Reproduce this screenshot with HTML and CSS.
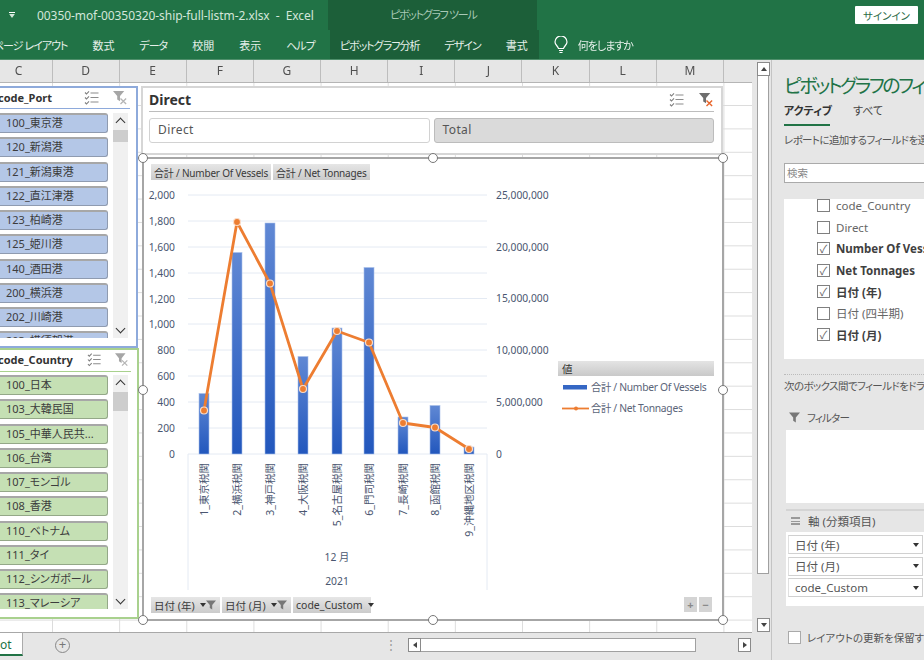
FILE: index.html
```html
<!DOCTYPE html>
<html lang="ja">
<head>
  <meta charset="UTF-8" />
  <title>00350-mof-00350320-ship-full-listm-2.xlsx - Excel</title>
  <link rel="stylesheet" href="styles.css">
</head>
<body>
  <svg class="defs" width="0" height="0">
    <symbol id="i-multi" viewBox="0 0 15 14">
      <path d="M1 2l1.5 1.5L5 .8M1 7l1.5 1.5L5 5.8M1 12l1.5 1.5L5 10.8" fill="none" stroke="#7f7f7f" stroke-width="1.1"/>
      <path d="M6.5 2.5h8M6.5 7h8M6.5 11.5h8" stroke="#8c8c8c" stroke-width="1.2"/>
    </symbol>
    <symbol id="i-clear" viewBox="0 0 16 16">
      <path d="M0 1h12L7.5 6.5V12L4.5 10V6.5z" fill="#a6a6a6"/>
      <path d="M8 9l6 6M14 9l-6 6" stroke="#b5b5b5" stroke-width="1.4"/>
    </symbol>
    <symbol id="i-clear-on" viewBox="0 0 16 16">
      <path d="M0 1h12L7.5 6.5V12L4.5 10V6.5z" fill="#6e6e6e"/>
      <path d="M8 9l6 6M14 9l-6 6" stroke="#e8652a" stroke-width="1.5"/>
    </symbol>
    <symbol id="i-funnel" viewBox="0 0 10 10">
      <path d="M0 .5h10L6.2 5v4.5L3.8 8V5z" fill="#777"/>
    </symbol>
  </svg>

  <div class="app">
    <div class="titlebar">
      <span class="qa-arrow"></span>
      <span class="doc-title">00350-mof-00350320-ship-full-listm-2.xlsx&nbsp; - &nbsp;Excel</span>
      <span class="tool-group">ピボットグラフ ツール</span>
      <button class="signin">サインイン</button>
    </div>
    <div class="tabs">
      <span class="tab tab-kana tab-first">ページ レイアウト</span>
      <span class="tab">数式</span>
      <span class="tab tab-kana">データ</span>
      <span class="tab">校閲</span>
      <span class="tab">表示</span>
      <span class="tab tab-kana tab-help">ヘルプ</span>
      <div class="tool-tabs">
        <span class="tab tab-kana">ピボットグラフ分析</span>
        <span class="tab tab-kana">デザイン</span>
        <span class="tab">書式</span>
      </div>
      <svg class="bulb" width="14" height="18" viewBox="0 0 14 18">
        <path d="M4.5 12.5C4 10 1 9 1 6a6 6 0 0 1 12 0c0 3-3 4-3.5 6.500z" fill="none" stroke="#fff" stroke-width="1.2"/>
        <path d="M5 14.5h4M5.500 16.5h3" stroke="#fff" stroke-width="1.2"/>
      </svg>
      <span class="tell-me">何をしますか</span>
    </div>

    <div class="main">
      <div class="book">
        <div class="book-top">
          <div class="sheet">
            <div class="col-heads">
              <span class="col">C</span><span class="col">D</span><span class="col">E</span><span class="col">F</span><span class="col">G</span><span class="col">H</span><span class="col">I</span><span class="col">J</span><span class="col">K</span><span class="col">L</span><span class="col">M</span>
            </div>
            <div class="grid">

              <div class="slicer slicer-port">
                <div class="slicer-head">
                  <span class="slicer-name">code_Port</span>
                  <svg class="head-icon"><use href="#i-multi"/></svg>
                  <svg class="head-icon"><use href="#i-clear"/></svg>
                </div>
                <div class="slicer-body">
                  <div class="slicer-list">
                    <div class="item">100_東京港</div>
                    <div class="item">120_新潟港</div>
                    <div class="item">121_新潟東港</div>
                    <div class="item">122_直江津港</div>
                    <div class="item">123_柏崎港</div>
                    <div class="item">125_姫川港</div>
                    <div class="item">140_酒田港</div>
                    <div class="item">200_横浜港</div>
                    <div class="item">202_川崎港</div>
                    <div class="item">203_横須賀港</div>
                  </div>
                  <div class="slicer-scroll">
                    <span class="chev chev-up"></span>
                    <span class="slicer-thumb"></span>
                    <span class="chev chev-down"></span>
                  </div>
                </div>
              </div>

              <div class="slicer slicer-country">
                <div class="slicer-head">
                  <span class="slicer-name">code_Country</span>
                  <svg class="head-icon"><use href="#i-multi"/></svg>
                  <svg class="head-icon"><use href="#i-clear"/></svg>
                </div>
                <div class="slicer-body">
                  <div class="slicer-list">
                    <div class="item">100_日本</div>
                    <div class="item">103_大韓民国</div>
                    <div class="item">105_中華人民共...</div>
                    <div class="item">106_台湾</div>
                    <div class="item">107_モンゴル</div>
                    <div class="item">108_香港</div>
                    <div class="item">110_ベトナム</div>
                    <div class="item">111_タイ</div>
                    <div class="item">112_シンガポール</div>
                    <div class="item">113_マレーシア</div>
                  </div>
                  <div class="slicer-scroll">
                    <span class="chev chev-up"></span>
                    <span class="slicer-thumb"></span>
                    <span class="chev chev-down"></span>
                  </div>
                </div>
              </div>

              <div class="slicer-direct">
                <div class="direct-head">
                  <span class="direct-name">Direct</span>
                  <svg class="head-icon"><use href="#i-multi"/></svg>
                  <svg class="head-icon"><use href="#i-clear-on"/></svg>
                </div>
                <div class="direct-items">
                  <div class="direct-item">Direct</div>
                  <div class="direct-item selected">Total</div>
                </div>
              </div>

              <div class="chart">
                <svg class="chart-svg" width="582" height="464" viewBox="142 157 582 464">
                  <defs>
                    <linearGradient id="bar-fill" x1="0" y1="0" x2="0" y2="1">
                      <stop offset="0" stop-color="#6088d4"/>
                      <stop offset="1" stop-color="#2257bd"/>
                    </linearGradient>
                    <linearGradient id="legend-head" x1="0" y1="0" x2="0" y2="1">
                      <stop offset="0" stop-color="#e4e4e4"/>
                      <stop offset="1" stop-color="#c9c9c9"/>
                    </linearGradient>
                  </defs>

                  <g class="gridlines">
                    <path d="M188 195H487M188 221H487M188 247H487M188 273H487M188 298.5H487M188 324H487M188 350H487M188 376H487M188 402H487M188 428H487M188 454H487"/>
                    <path d="M188 454V590M487 454V590"/>
                  </g>

                  <g class="axis-left">
                    <text x="175" y="199">2,000</text>
                    <text x="175" y="225">1,800</text>
                    <text x="175" y="251">1,600</text>
                    <text x="175" y="277">1,400</text>
                    <text x="175" y="303">1,200</text>
                    <text x="175" y="328">1,000</text>
                    <text x="175" y="354">800</text>
                    <text x="175" y="380">600</text>
                    <text x="175" y="406">400</text>
                    <text x="175" y="432">200</text>
                    <text x="175" y="458">0</text>
                  </g>

                  <g class="axis-right">
                    <text x="496" y="199">25,000,000</text>
                    <text x="496" y="251">20,000,000</text>
                    <text x="496" y="302">15,000,000</text>
                    <text x="496" y="354">10,000,000</text>
                    <text x="496" y="406">5,000,000</text>
                    <text x="496" y="458">0</text>
                  </g>

                  <g class="bars">
                    <rect x="199" y="393.5" width="10" height="60.5"/>
                    <rect x="232" y="252.5" width="10" height="201.5"/>
                    <rect x="265" y="223" width="10" height="231"/>
                    <rect x="298" y="356.5" width="10" height="97.5"/>
                    <rect x="332" y="328" width="10" height="126"/>
                    <rect x="364" y="267.5" width="10" height="186.5"/>
                    <rect x="398" y="417" width="10" height="37"/>
                    <rect x="430" y="405.5" width="10" height="48.5"/>
                    <rect x="464" y="447" width="10" height="7"/>
                  </g>

                  <polyline class="line" points="204,410.5 237,222 270,283.5 303,389 337,331 369,342.5 403,423 435,427.5 469,449"/>
                  <g class="markers">
                    <circle cx="204" cy="410.5" r="3.5"/>
                    <circle cx="237" cy="222" r="3.5"/>
                    <circle cx="270" cy="283.5" r="3.5"/>
                    <circle cx="303" cy="389" r="3.5"/>
                    <circle cx="337" cy="331" r="3.5"/>
                    <circle cx="369" cy="342.5" r="3.5"/>
                    <circle cx="403" cy="423" r="3.5"/>
                    <circle cx="435" cy="427.5" r="3.5"/>
                    <circle cx="469" cy="449" r="3.5"/>
                  </g>

                  <g class="cat-labels">
                    <text transform="translate(208 463) rotate(-90)">1_東京税関</text>
                    <text transform="translate(241 463) rotate(-90)">2_横浜税関</text>
                    <text transform="translate(274 463) rotate(-90)">3_神戸税関</text>
                    <text transform="translate(307 463) rotate(-90)">4_大阪税関</text>
                    <text transform="translate(341 463) rotate(-90)">5_名古屋税関</text>
                    <text transform="translate(373 463) rotate(-90)">6_門司税関</text>
                    <text transform="translate(407 463) rotate(-90)">7_長崎税関</text>
                    <text transform="translate(439 463) rotate(-90)">8_函館税関</text>
                    <text transform="translate(473 463) rotate(-90)">9_沖縄地区税関</text>
                  </g>
                  <text class="level" x="337" y="561">12 月</text>
                  <text class="level" x="337" y="585">2021</text>

                  <rect x="558" y="361" width="156" height="15" fill="url(#legend-head)"/>
                  <text class="legend-title" x="562" y="373">値</text>
                  <rect x="563" y="385" width="24" height="4.5" fill="#3567c4"/>
                  <text class="legend-text" x="591" y="391">合計 / Number Of Vessels</text>
                  <path d="M562 408.5H589" stroke="#ed7d31" stroke-width="1.8"/>
                  <circle cx="576" cy="408.5" r="2" fill="#ed7d31"/>
                  <text class="legend-text" x="591" y="412">合計 / Net Tonnages</text>
                </svg>

                <div class="field-row field-row-top">
                  <span class="field-btn">合計 / Number Of Vessels</span>
                  <span class="field-btn">合計 / Net Tonnages</span>
                </div>
                <div class="field-row field-row-bottom">
                  <span class="field-btn">日付 (年) <i class="drop"></i><svg class="funnel"><use href="#i-funnel"/></svg></span>
                  <span class="field-btn">日付 (月) <i class="drop"></i><svg class="funnel"><use href="#i-funnel"/></svg></span>
                  <span class="field-btn">code_Custom <i class="drop"></i></span>
                </div>
                <div class="zoom-btns">
                  <span class="zoom-btn">+</span>
                  <span class="zoom-btn">−</span>
                </div>

                <span class="handle h-tl"></span>
                <span class="handle h-tc"></span>
                <span class="handle h-tr"></span>
                <span class="handle h-ml"></span>
                <span class="handle h-mr"></span>
                <span class="handle h-bl"></span>
                <span class="handle h-bc"></span>
                <span class="handle h-br"></span>
              </div>

            </div>
          </div>
          <div class="vscroll">
            <span class="sb-btn"><i class="tri-up"></i></span>
            <span class="vthumb"></span>
            <span class="sb-btn"><i class="tri-down"></i></span>
          </div>
        </div>
        <div class="sheet-bar">
          <span class="sheet-tab">ot</span>
          <span class="add-sheet">+</span>
          <span class="bar-dots">⋮</span>
          <div class="hscroll">
            <span class="sb-btn"><i class="tri-left"></i></span>
            <span class="hthumb"></span>
            <span class="sb-btn"><i class="tri-right"></i></span>
          </div>
        </div>
      </div>

      <div class="pane">
        <h2 class="pane-title">ピボットグラフのフィールド</h2>
        <div class="pane-tabs">
          <span class="pane-tab active">アクティブ</span>
          <span class="pane-tab">すべて</span>
        </div>
        <p class="pane-text">レポートに追加するフィールドを選択してください:</p>
        <div class="pane-search">検索</div>
        <ul class="field-list">
          <li class="field-row-item"><span class="check"></span>code_Country</li>
          <li class="field-row-item"><span class="check"></span>Direct</li>
          <li class="field-row-item on"><span class="check">✓</span>Number Of Vessels</li>
          <li class="field-row-item on"><span class="check">✓</span>Net Tonnages</li>
          <li class="field-row-item on"><span class="check">✓</span>日付 (年)</li>
          <li class="field-row-item"><span class="check"></span>日付 (四半期)</li>
          <li class="field-row-item on"><span class="check">✓</span>日付 (月)</li>
        </ul>
        <p class="pane-text pane-drag">次のボックス間でフィールドをドラッグしてください:</p>
        <div class="area-label">
          <svg width="11" height="11"><use href="#i-funnel"/></svg>
          <span class="filter-name">フィルター</span>
        </div>
        <div class="area-box area-filter"></div>
        <div class="area-label area-label-axis">
          <span class="lines-icon"></span>
          <span>軸 (分類項目)</span>
        </div>
        <div class="area-box area-axis">
          <div class="axis-item">日付 (年)<i class="drop"></i></div>
          <div class="axis-item">日付 (月)<i class="drop"></i></div>
          <div class="axis-item">code_Custom<i class="drop"></i></div>
        </div>
        <div class="defer">
          <span class="check"></span>
          <span>レイアウトの更新を保留する</span>
        </div>
      </div>
    </div>
  </div>
</body>
</html>
```

FILE: styles.css
```css
* {
  box-sizing: border-box;
}
body {
  margin: 0;
  width: 924px;
  height: 660px;
  overflow: hidden;
  font-family: "Noto Sans", "Noto Sans CJK JP", sans-serif;
  font-feature-settings: "palt";
  color: #444;
  background-color: #e6e6e6;
}
.defs {
  position: absolute;
}
.app {
  display: flex;
  flex-direction: column;
  height: 660px;
  overflow: hidden;
  filter: blur(0.5px);
}

/* title bar and ribbon tabs */
.titlebar {
  display: flex;
  align-items: center;
  height: 30px;
  background-color: #217346;
  color: #d3e6da;
  font-size: 12px;
}
.qa-arrow {
  width: 6px;
  height: 6px;
  margin-left: 9px;
  border-top: 1px solid #fff;
  border-bottom: 4px solid #d3e6da;
  clip-path: polygon(0 0, 100% 0, 100% 30%, 50% 100%, 0 30%);
}
.doc-title {
  margin-left: 22px;
  width: 277px;
  letter-spacing: -0.07px;
  white-space: nowrap;
}
.tool-group {
  width: 209px;
  margin-left: 14px;
  height: 30px;
  line-height: 30px;
  padding-left: 62px;
  background-color: #1c5f39;
  color: #a9c9b6;
  font-size: 11px;
  letter-spacing: -1.3px;
  white-space: nowrap;
}
.signin {
  margin-left: auto;
  margin-right: 6px;
  width: 63px;
  height: 18px;
  padding: 0;
  border: none;
  border-radius: 1px;
  background-color: #fff;
  color: #2b6b47;
  font: inherit;
  font-size: 10.5px;
}
.tabs {
  display: flex;
  align-items: center;
  height: 30px;
  border-bottom: 1px solid #4f8f6b;
  background-color: #217346;
  color: #e6f0ea;
  font-size: 11px;
}
.tab {
  margin-right: 25px;
  white-space: nowrap;
}
.tab-kana {
  letter-spacing: -1px;
}
.tab-first {
  margin-left: -7px;
}
.tab-help {
  margin-right: 15px;
}
.tool-tabs {
  display: flex;
  align-items: center;
  flex: none;
  width: 209px;
  height: 29px;
  padding-left: 10px;
  background-color: #1c5f39;
}
.tool-tabs .tab:last-child {
  margin-right: 0;
}
.bulb {
  margin-left: 15px;
}
.tell-me {
  margin-left: 10px;
  letter-spacing: -1px;
  white-space: nowrap;
}

/* workbook */
.main {
  display: flex;
  flex: 1;
  min-height: 0;
}
.book {
  display: flex;
  flex-direction: column;
  width: 772px;
  flex: none;
  border-right: 1px solid #c4c4c4;
}
.book-top {
  display: flex;
  height: 573px;
  flex: none;
}
.sheet {
  display: flex;
  flex-direction: column;
  width: 752px;
  flex: none;
}
.col-heads {
  display: flex;
  height: 23px;
  flex: none;
  overflow: hidden;
  border-bottom: 1px solid #b5b5b5;
  background-color: #e6e6e6;
}
.col {
  flex: none;
  width: 67.15px;
  border-right: 1px solid #bdbdbd;
  text-align: center;
  font-size: 12px;
  line-height: 22px;
  color: #505050;
}
.col:first-child {
  margin-left: -14.65px;
}
.grid {
  position: relative;
  flex: 1;
  border-bottom: 1px solid #a8a8a8;
  background-color: #fff;
  background-image:
    linear-gradient(90deg, #dcdcdc 1px, transparent 1px),
    linear-gradient(#dcdcdc 1px, transparent 1px);
  background-size: 67.15px 100%, 100% 23.4px;
  background-position: 52px 0, 0 22px;
}

/* slicers */
.slicer {
  position: absolute;
  display: flex;
  flex-direction: column;
  padding-right: 6px;
  background-color: #fff;
  border-width: 2px;
  border-style: solid;
}
.slicer-port {
  left: -10px;
  top: 3px;
  width: 148px;
  height: 262px;
  border-color: #8eaadb;
}
.slicer-country {
  left: -10px;
  top: 265px;
  width: 149px;
  height: 271px;
  border-color: #a9d18e;
}
.slicer-head {
  display: flex;
  align-items: center;
  height: 21px;
  flex: none;
  padding: 0 2px 2px 6px;
  border-bottom: 1px solid #8eaadb;
}
.slicer-country .slicer-head {
  height: 22px;
  border-bottom-color: #a9d18e;
}
.slicer-name {
  flex: 1;
  font-size: 11px;
  font-weight: 700;
  color: #333;
}
.head-icon {
  width: 15px;
  height: 15px;
  margin-left: 14px;
}
.direct-head .head-icon:last-child {
  margin-left: 15px;
}
.slicer-body {
  display: flex;
  gap: 5px;
  height: 225px;
  margin-top: 4px;
}
.slicer-country .slicer-body {
  height: 234px;
  margin-top: 3px;
}
.slicer-list {
  display: flex;
  flex-direction: column;
  gap: 4.25px;
  width: 116px;
  overflow: hidden;
}
.item {
  flex: none;
  height: 20px;
  padding-left: 13px;
  border: 1px solid #8f9bb0;
  border-top: 2px solid #a7a7a7;
  border-radius: 3px;
  background-color: #b4c7e7;
  font-size: 11px;
  line-height: 16px;
  color: #3c3c3c;
  white-space: nowrap;
}
.slicer-country .item {
  border-color: #94a888;
  border-top-color: #a7a7a7;
  background-color: #c5e0b4;
}
.slicer-scroll {
  position: relative;
  width: 15px;
  flex: none;
  background-color: #f0f0f0;
}
.slicer-thumb {
  position: absolute;
  left: 0;
  top: 17px;
  width: 15px;
  height: 12px;
  background-color: #cdcdcd;
}
.slicer-country .slicer-thumb {
  height: 19px;
}
.chev {
  position: absolute;
  left: 4px;
  width: 7px;
  height: 7px;
  border-left: 1.5px solid #333;
  border-top: 1.5px solid #333;
}
.chev-up {
  top: 6px;
  transform: rotate(45deg);
}
.chev-down {
  bottom: 6px;
  transform: rotate(225deg);
}
.slicer-direct {
  position: absolute;
  left: 141px;
  top: 3px;
  width: 582px;
  height: 69px;
  padding: 0 7px 0 6px;
  background-color: #fff;
  border: 2px solid #d6d6d6;
}
.direct-head {
  display: flex;
  align-items: center;
  height: 24px;
  border-bottom: 1px solid #bdbdbd;
}
.direct-name {
  flex: 1;
  font-size: 14px;
  font-weight: 700;
  color: #333;
}
.direct-items {
  display: flex;
  gap: 4px;
  margin-top: 6px;
}
.direct-item {
  flex: 1;
  height: 25px;
  padding-left: 8px;
  border: 1px solid #d2d2d2;
  border-radius: 3px;
  font-size: 12px;
  line-height: 21px;
  letter-spacing: 0.4px;
  color: #555;
}
.direct-item.selected {
  border-color: #bcbcbc;
  background-color: #dadada;
}

/* chart */
.chart {
  position: absolute;
  left: 142px;
  top: 74px;
  width: 582px;
  height: 464px;
  background-color: #fff;
  border: 2px solid #a6a6a6;
}
.chart-svg {
  position: absolute;
  left: -2px;
  top: -2px;
}
.gridlines path {
  fill: none;
  stroke: #e4eaf3;
  stroke-width: 1;
}
.axis-left text,
.axis-right text,
.level,
.cat-labels text,
.legend-text {
  font-size: 10.3px;
  fill: #4a5670;
}
.axis-left text {
  text-anchor: end;
}
.cat-labels text {
  text-anchor: end;
  font-size: 10.5px;
}
.level {
  text-anchor: middle;
}
.legend-title {
  font-size: 10.5px;
  fill: #333;
}
.legend-text {
  fill: #5a6478;
  letter-spacing: -0.3px;
}
.bars rect {
  fill: url(#bar-fill);
  stroke: #a9c0ea;
  stroke-width: 0.6;
}
.line {
  fill: none;
  stroke: #ed7d31;
  stroke-width: 2.8;
  stroke-linejoin: round;
}
.markers circle {
  fill: #ed7d31;
  stroke: #f9dcc8;
  stroke-width: 1.2;
}
.field-row {
  position: absolute;
  display: flex;
  gap: 2px;
  left: 7px;
}
.field-row-top {
  top: 5px;
}
.field-row-bottom {
  top: 438px;
}
.field-btn {
  display: flex;
  align-items: center;
  height: 16px;
  padding: 0 3px;
  background: linear-gradient(#e6e6e6, #cbcbcb);
  font-size: 10px;
  letter-spacing: -0.2px;
  color: #3a3a3a;
  white-space: nowrap;
}
.field-row-bottom .field-btn {
  width: 69px;
  font-size: 10.5px;
  letter-spacing: 0;
}
.field-row-bottom .field-btn:last-child {
  width: 78px;
}
.drop {
  display: inline-block;
  width: 0;
  height: 0;
  margin-left: 5px;
  border-left: 3.5px solid transparent;
  border-right: 3.5px solid transparent;
  border-top: 4px solid #333;
}
.funnel {
  width: 10px;
  height: 10px;
}
.zoom-btns {
  position: absolute;
  right: 10px;
  top: 438px;
  display: flex;
  gap: 2px;
}
.zoom-btn {
  width: 13px;
  height: 15px;
  background-color: #d4d4d4;
  text-align: center;
  font-size: 11px;
  font-weight: 700;
  line-height: 15px;
  color: #8a8a8a;
}
.handle {
  position: absolute;
  width: 10px;
  height: 10px;
  border: 1.5px solid #777;
  border-radius: 50%;
  background-color: #fff;
}
.h-tl { left: -6px; top: -6px; }
.h-tc { left: 284px; top: -6px; }
.h-tr { right: -6px; top: -6px; }
.h-ml { left: -6px; top: 226px; }
.h-mr { right: -6px; top: 226px; }
.h-bl { left: -6px; bottom: -6px; }
.h-bc { left: 284px; bottom: -6px; }
.h-br { right: -6px; bottom: -6px; }

/* scroll bars */
.vscroll {
  display: flex;
  flex-direction: column;
  width: 19px;
  flex: none;
  padding: 2px 2px 0 5px;
}
.sb-btn {
  display: flex;
  align-items: center;
  justify-content: center;
  flex: none;
  width: 13px;
  height: 14px;
  border: 1px solid #8a8a8a;
  background-color: #fff;
}
.vthumb {
  height: 498px;
  border: 1px solid #a0a0a0;
  border-top: none;
  background-color: #fff;
  margin-bottom: 44px;
}
.tri-up, .tri-down, .tri-left, .tri-right {
  width: 0;
  height: 0;
  border-style: solid;
  border-color: transparent;
}
.tri-up {
  border-width: 0 3.5px 4px;
  border-bottom-color: #444;
}
.tri-down {
  border-width: 4px 3.5px 0;
  border-top-color: #444;
}
.tri-left {
  border-width: 3.5px 4px 3.5px 0;
  border-right-color: #444;
}
.tri-right {
  border-width: 3.5px 0 3.5px 4px;
  border-left-color: #444;
}
.sheet-bar {
  display: flex;
  align-items: flex-start;
  flex: 1;
  background-color: #e6e6e6;
}
.sheet-tab {
  width: 23px;
  height: 23px;
  border-right: 1px solid #aaa;
  border-bottom: 2px solid #217346;
  background-color: #fff;
  font-size: 12px;
  line-height: 24px;
  color: #217346;
}
.add-sheet {
  width: 15px;
  height: 15px;
  margin: 5px 0 0 32px;
  border: 1.5px solid #888;
  border-radius: 50%;
  text-align: center;
  font-size: 13px;
  line-height: 11px;
  color: #777;
}
.bar-dots {
  margin: 4px 0 0 315px;
  font-size: 12px;
  line-height: 16px;
  color: #999;
}
.hscroll {
  display: flex;
  width: 344px;
  margin: 5px 0 0 11px;
}
.hthumb {
  width: 275px;
  height: 14px;
  border: 1px solid #a0a0a0;
  border-left: none;
  background-color: #fff;
  margin-right: 42px;
}

/* field pane */
.pane {
  flex: 1;
  min-width: 0;
  padding-left: 12px;
  overflow: hidden;
  white-space: nowrap;
  background-color: #e6e6e6;
}
.pane-title {
  margin: 14px 0 0;
  font-size: 19px;
  font-weight: 400;
  line-height: 25px;
  letter-spacing: -2.4px;
  color: #217346;
}
.pane-tabs {
  display: flex;
  height: 25px;
  margin-top: 2px;
  font-size: 11px;
  line-height: 20px;
}
.pane-tab {
  margin-right: 23px;
}
.pane-tab.active {
  width: 46px;
  height: 25px;
  border-bottom: 2px solid #217346;
  font-weight: 700;
  color: #333;
}
.pane-text {
  margin: 6px 0 0;
  font-size: 10.5px;
  line-height: 16px;
  letter-spacing: -0.6px;
  color: #555;
}
.pane-search {
  width: 160px;
  height: 20px;
  margin-top: 15px;
  padding-left: 2px;
  border: 1px solid #aaa;
  background-color: #fff;
  font-size: 10.5px;
  line-height: 18px;
  color: #888;
}
.field-list {
  width: 160px;
  height: 160px;
  margin: 16px 0 0;
  padding: 0 0 0 33px;
  overflow: hidden;
  list-style: none;
  background-color: #fff;
}
.field-row-item {
  display: flex;
  align-items: center;
  height: 21.5px;
  font-size: 11.5px;
  color: #666;
}
.field-row-item:first-child {
  margin-top: -4px;
}
.field-row-item.on {
  font-weight: 700;
  color: #404040;
}
.check {
  display: inline-block;
  width: 13px;
  height: 13px;
  flex: none;
  margin-right: 6px;
  border: 1px solid #7f7f7f;
  background-color: #fff;
  font-size: 11px;
  font-weight: 400;
  line-height: 11px;
  text-align: center;
  color: #666;
}
.pane-drag {
  margin-top: 15px;
  padding-top: 3px;
  border-top: 1px dotted #bbb;
}
.area-label {
  display: flex;
  align-items: center;
  gap: 7px;
  height: 16px;
  margin: 15px 0 0 5px;
  font-size: 10.5px;
  color: #555;
}
.filter-name {
  letter-spacing: -0.8px;
}
.area-box {
  width: 160px;
  margin-left: 2px;
  background-color: #fff;
}
.area-filter {
  height: 73px;
  margin-top: 5px;
  margin-bottom: 6px;
}
.area-label-axis {
  align-items: flex-start;
  gap: 8px;
  width: 160px;
  height: 23px;
  margin: 0 0 0 2px;
  padding: 2px 0 0 5px;
  border-top: 2px solid #d4d4d4;
  font-size: 11.5px;
}
.lines-icon {
  width: 9px;
  height: 8px;
  margin-top: 4px;
  border-top: 2px solid #999;
  border-bottom: 2px solid #999;
  background: linear-gradient(#999, #999) center / 100% 1px no-repeat;
}
.area-axis {
  height: 74px;
  padding: 3px 0 0 2px;
}
.axis-item {
  display: flex;
  align-items: center;
  justify-content: space-between;
  width: 135px;
  height: 19px;
  margin-bottom: 2.5px;
  padding: 0 3px 0 6px;
  border: 1px solid #d0d0d0;
  border-left: 1px solid #e0e0e0;
  font-size: 11.5px;
  color: #555;
}
.defer {
  display: flex;
  align-items: center;
  margin: 24px 0 0 4px;
  font-size: 10.5px;
  color: #555;
}
.defer .check {
  border-color: #aaa;
}
```
